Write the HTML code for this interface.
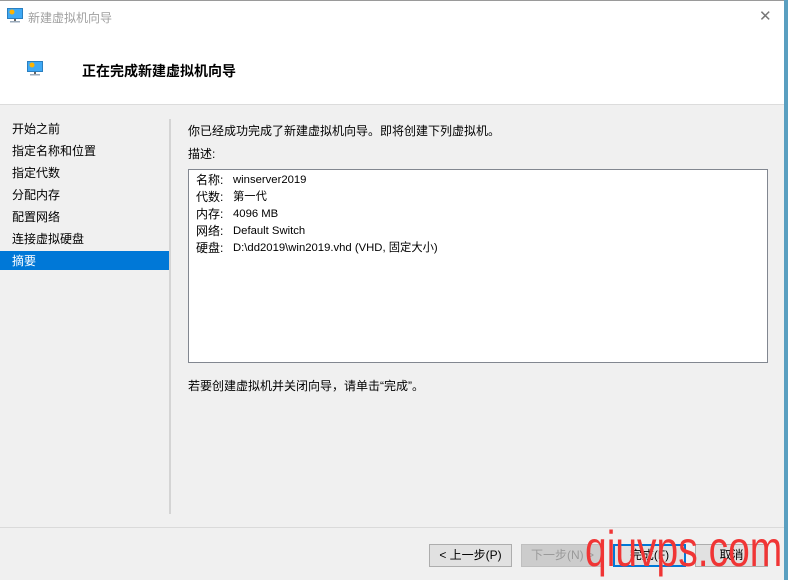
<!DOCTYPE html>
<html><head><meta charset="utf-8"><style>
*{margin:0;padding:0;box-sizing:border-box}
body{width:788px;height:580px;overflow:hidden;background:#5a9fc0;font-family:"Liberation Sans","Noto Sans CJK SC",sans-serif;font-size:12px;color:#000;position:relative}
.win{position:absolute;left:0;top:0;width:784px;height:580px;background:#f0f0f0;border-top:1px solid #9a9a9a}
.hdr{position:absolute;left:0;top:0;width:784px;height:104px;background:#fff;border-bottom:1px solid #dcdcdc}
.t{position:absolute;white-space:nowrap}
.nav{position:absolute;left:12px;line-height:22px}
.sel{position:absolute;left:0;top:250px;width:169px;height:19px;background:#0078d7}
.box{position:absolute;left:188px;top:168px;width:580px;height:194px;background:#fff;border:1px solid #828790}
.btn{position:absolute;top:543px;height:23px;border:1px solid #adadad;background:#e1e1e1;text-align:center;line-height:21px;font-size:12px}
.lat{font-size:11.3px}
</style></head><body>
<div class="win">
<div class="hdr"></div>
<svg class="t" style="left:7px;top:7px" width="17" height="16"><rect x="0.5" y="0.5" width="15" height="10" fill="#3fa9f5" stroke="#2a7fc0"/><circle cx="5" cy="4" r="2.5" fill="#ffb300"/><rect x="7" y="11" width="2" height="2" fill="#666"/><rect x="3" y="13" width="10" height="1.5" fill="#9ab"/></svg>
<div class="t" style="left:28px;top:8px;color:#a0a0a0;font-size:12px">新建虚拟机向导</div>
<div class="t" style="left:759px;top:6px;color:#777;font-size:15px">✕</div>
<svg class="t" style="left:27px;top:60px" width="17" height="16"><rect x="0.5" y="0.5" width="15" height="10" fill="#3fa9f5" stroke="#2a7fc0"/><circle cx="5" cy="4" r="2.5" fill="#ffb300"/><rect x="7" y="11" width="2" height="2" fill="#666"/><rect x="3" y="13" width="10" height="1.5" fill="#9ab"/></svg>
<div class="t" style="left:82px;top:60px;font-size:14px;font-weight:bold">正在完成新建虚拟机向导</div>
<div class="sel"></div>
<div class="nav" style="top:117px">开始之前<br>指定名称和位置<br>指定代数<br>分配内存<br>配置网络<br>连接虚拟硬盘<br><span style="color:#fff">摘要</span></div>
<div class="t" style="left:169px;top:118px;width:2px;height:395px;background:#d4d4d4"></div>
<div class="t" style="left:188px;top:121px">你已经成功完成了新建虚拟机向导。即将创建下列虚拟机。</div>
<div class="t" style="left:188px;top:144px">描述:</div>
<div class="box"></div>
<div class="t" style="left:196px;top:171px;line-height:17px">名称:<br>代数:<br>内存:<br>网络:<br>硬盘:</div>
<div class="t lat" style="left:233px;top:171px;line-height:17px">winserver2019<br>第一代<br>4096 MB<br>Default Switch<br>D:\dd2019\win2019.vhd (VHD, 固定大小)</div>
<div class="t" style="left:188px;top:376px">若要创建虚拟机并关闭向导，请单击“完成”。</div>
<div class="t" style="left:0;top:526px;width:784px;height:1px;background:#dadada"></div>
<div class="btn" style="left:429px;width:83px">&lt; 上一步(P)</div>
<div class="btn" style="left:521px;width:83px;background:#cccccc;border-color:#bfbfbf;color:#9a9a9a">下一步(N) &gt;</div>
<div class="btn" style="left:613px;width:73px;border:2px solid #0078d7;line-height:19px">完成(F)</div>
<div class="btn" style="left:695px;width:73px">取消</div>
</div>
<div class="t" style="left:585px;top:520px;font-family:'Liberation Sans',sans-serif;font-size:50px;color:#f03535;transform:scaleX(0.78);transform-origin:left top">qiuvps.com</div>
</body></html>
